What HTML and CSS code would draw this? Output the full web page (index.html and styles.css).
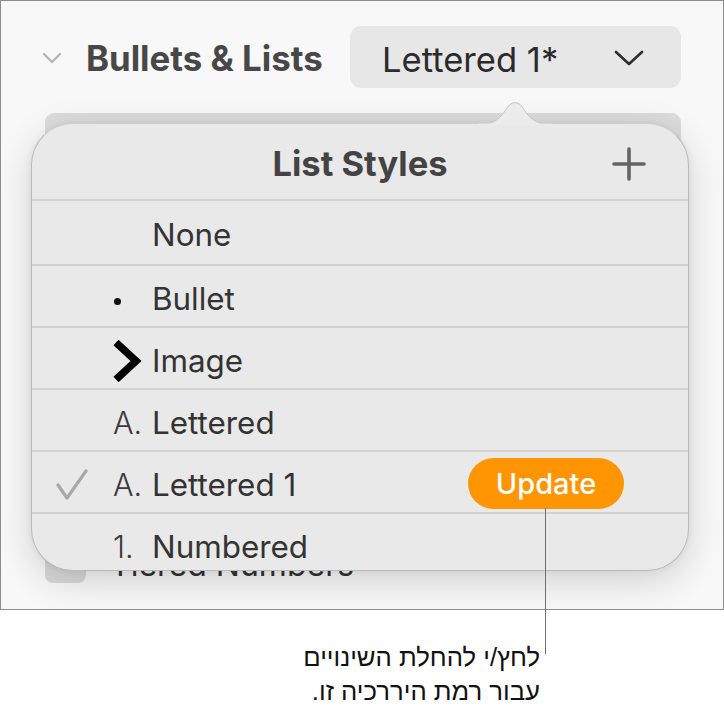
FILE: index.html
```html
<!DOCTYPE html>
<html lang="en">
<head>
<meta charset="utf-8">
<title>List Styles</title>
<link rel="stylesheet" href="styles.css">
</head>
<body>
<div class="figure">
  <div class="panel">
    <div class="section-head">
      <svg class="disclosure" width="20" height="12" viewBox="0 0 20 12"><polyline points="2,2 10,10 18,2" fill="none" stroke="#b3b3b3" stroke-width="2.2" stroke-linecap="round" stroke-linejoin="round"/></svg>
      <h2 class="section-title">Bullets &amp; Lists</h2>
      <div class="select">
        <span class="select-label">Lettered 1*</span>
        <svg class="select-chevron" width="32" height="18" viewBox="0 0 32 18"><polyline points="3,3 16,15 29,3" fill="none" stroke="#2e2e2e" stroke-width="2.6" stroke-linecap="round" stroke-linejoin="round"/></svg>
      </div>
    </div>
    <div class="field-bar"></div>
    <div class="check-row">
      <span class="checkbox"></span>
      <span class="check-label">Tiered Numbers</span>
    </div>

    <div class="popover">
      <svg class="popover-arrow" width="74" height="31" viewBox="0 0 74 31"><path d="M0,30 C14,30 20,28 29,14 C33,7 41,7 45,14 C54,28 60,30 74,30" fill="#ececec" stroke="#c4c4c4" stroke-width="1"/><rect x="0" y="29.6" width="74" height="2" fill="#ececec"/></svg>
      <div class="popover-head">
        <h3 class="popover-title">List Styles</h3>
        <svg class="add-icon" width="34" height="34" viewBox="0 0 34 34"><path d="M17,2 V32 M2,17 H32" stroke="#646464" stroke-width="3.6" stroke-linecap="round"/></svg>
      </div>
      <ul class="styles">
        <li class="row row-first"><span class="check"></span><span class="marker"></span><span class="label">None</span></li>
        <li class="row"><span class="check"></span><span class="marker"><span class="dot"></span></span><span class="label">Bullet</span></li>
        <li class="row"><span class="check"></span><span class="marker"><svg width="30" height="42" viewBox="0 0 30 42"><polyline points="3,2.5 23,21 3,39.5" fill="none" stroke="#000" stroke-width="7.5" stroke-linejoin="miter"/></svg></span><span class="label">Image</span></li>
        <li class="row"><span class="check"></span><span class="marker marker-text">A.</span><span class="label">Lettered</span></li>
        <li class="row"><span class="check"><svg width="32" height="32" viewBox="0 0 32 32"><polyline points="2,16 11,29 30,2" fill="none" stroke="#a8a8a8" stroke-width="3.2" stroke-linecap="round" stroke-linejoin="round"/></svg></span><span class="marker marker-text">A.</span><span class="label">Lettered 1</span><span class="update">Update</span></li>
        <li class="row"><span class="check"></span><span class="marker marker-text">1.</span><span class="label">Numbered</span></li>
      </ul>
    </div>
  </div>
  <div class="callout-line"></div>
  <p class="callout" dir="rtl" lang="he">לחץ/י להחלת השינויים<br>עבור רמת היררכיה זו.</p>
</div>
</body>
</html>
```

FILE: styles.css
```css
* { box-sizing: border-box; }

html, body {
  margin: 0;
  padding: 0;
  background: #ffffff;
}

body {
  font-family: "Inter", "Liberation Sans", sans-serif;
  width: 724px;
  height: 710px;
  overflow: hidden;
}

.figure {
  position: relative;
  width: 724px;
}

.panel {
  position: relative;
  width: 724px;
  height: 610px;
  border: 1px solid #8c8c8c;
  background: #f8f8f8;
  overflow: hidden;
}

.section-head {
  display: flex;
  align-items: center;
  padding: 25px 42px 0 41px;
  height: 87px;
}

.disclosure {
  flex: none;
  margin-right: 24px;
  margin-top: 2px;
}

.section-title {
  margin: 0;
  font-size: 34.8px;
  font-weight: 700;
  color: #474747;
  margin-top: 2px;
}

.select {
  margin-left: auto;
  width: 331px;
  height: 62px;
  border-radius: 11px;
  background: #e7e7e7;
  display: flex;
  align-items: center;
  padding: 0 36px 0 32px;
}

.select-label {
  font-size: 34.6px;
  color: #2b2b2b;
  flex: 1;
  margin-top: 3px;
}

.select-chevron {
  flex: none;
  margin-top: 2px;
}

.field-bar {
  margin: 25px 42px 0 44px;
  height: 44px;
  border-radius: 9px;
  background: #dcdcdc;
}

.check-row {
  display: flex;
  align-items: flex-end;
  gap: 24px;
  margin: 386px 0 0 44px;
}

.checkbox {
  width: 41px;
  height: 40px;
  border-radius: 8px;
  background: #d9d9d9;
}

.check-label {
  font-size: 32px;
  color: #333;
  line-height: 1;
  margin-bottom: 2px;
}

.popover {
  position: absolute;
  left: 30px;
  top: 122px;
  width: 658px;
  height: 448px;
  background: #e9e9e9;
  border: 1px solid #b9b9b9;
  border-top-color: #cfcfcf;
  border-radius: 42px;
  box-shadow: 0 10px 36px rgba(0, 0, 0, 0.16), 0 0 6px rgba(0, 0, 0, 0.06);
}

.popover-arrow {
  position: absolute;
  left: 446px;
  top: -30px;
}

.popover-head {
  position: relative;
  height: 75px;
  display: flex;
  align-items: center;
  justify-content: center;
}

.popover-title {
  margin: 0;
  font-size: 34.5px;
  font-weight: 700;
  color: #434343;
  padding-top: 4px;
}

.add-icon {
  position: absolute;
  right: 42px;
  top: 23px;
}

.styles {
  list-style: none;
  margin: 0;
  padding: 0;
}

.row {
  display: flex;
  align-items: center;
  height: 62px;
  border-top: 2px solid #d2d2d2;
  padding-top: 5px;
}

.row-first {
  height: 65px;
}

.check {
  flex: none;
  width: 81px;
  padding-left: 24px;
  display: flex;
  align-items: center;
}

.marker {
  flex: none;
  width: 39px;
  display: flex;
  align-items: center;
}

.marker-text {
  font-size: 30.5px;
  font-weight: 300;
  color: #3a3a3a;
}

.dot {
  width: 7px;
  height: 7px;
  border-radius: 50%;
  background: #111;
  margin-left: 1px;
  margin-top: 6px;
}

.label {
  font-size: 31.4px;
  color: #333333;
}

.update {
  margin-left: auto;
  margin-right: 64px;
  margin-top: -3px;
  width: 156px;
  height: 51px;
  border-radius: 26px;
  background: #ff9500;
  color: #ffffff;
  font-size: 29px;
  font-weight: 500;
  display: flex;
  align-items: center;
  justify-content: center;
}

.callout-line {
  position: absolute;
  left: 545px;
  top: 508px;
  width: 1px;
  height: 146px;
  background: #6f6f6f;
}

.callout {
  margin: 0;
  padding: 30px 184px 0 0;
  font-family: "Liberation Sans", "DejaVu Sans", sans-serif;
  font-size: 25.7px;
  line-height: 34px;
  color: #111;
  text-align: right;
}
```
